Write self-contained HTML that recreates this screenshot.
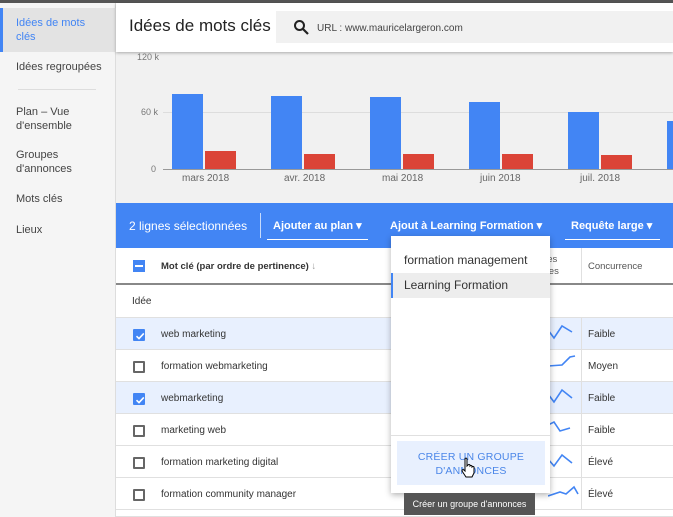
<!DOCTYPE html>
<html style="width:673px;height:517px;overflow:hidden"><head><meta charset="utf-8"><style>
*{margin:0;padding:0;box-sizing:border-box}
body{width:673px;height:517px;overflow:hidden;position:relative;background:#f1f1f1;font-family:"Liberation Sans",Arial,sans-serif;color:#333}
.a{position:absolute}
.side{left:0;top:3px;width:116px;height:514px;background:#f5f5f5;border-right:1px solid #ddd}
.si{position:absolute;left:16px;font-size:11px;color:#444;line-height:14px}
.bb{background:#4285f4}.rb{background:#db4437}
.row{position:absolute;left:116px;width:557px;height:32px;border-bottom:1px solid #e0e0e0;background:#fff;font-size:10px}
.row.sel{background:#e8f0fe}
.cb{position:absolute;left:17px;top:11px;width:12px;height:12px;border:2px solid #666;border-radius:1px;background:#fff}
.cb.on{background:#4285f4;border-color:#4285f4}
.cb.on svg{position:absolute;left:-1px;top:-1px}
.kw{position:absolute;left:45px;top:11px;color:#333}
.cc{position:absolute;left:472px;top:11px;color:#333}
.vd{position:absolute;left:465px;top:0;width:1px;height:32px;background:#e0e0e0}
</style></head><body>
<div class="a" style="left:0;top:0;width:673px;height:3px;background:#555"></div>
<div class="a side"></div>
<div class="a" style="left:0;top:8px;width:116px;height:44px;background:#e3e3e3"></div>
<div class="a" style="left:0;top:8px;width:3px;height:44px;background:#4285f4"></div>
<div class="si" style="top:16px;color:#4285f4">Idées de mots<br>clés</div>
<div class="si" style="top:60px">Idées regroupées</div>
<div class="a" style="left:18px;top:89px;width:78px;height:1px;background:#ddd"></div>
<div class="si" style="top:105px">Plan – Vue<br>d'ensemble</div>
<div class="si" style="top:148px">Groupes<br>d'annonces</div>
<div class="si" style="top:192px">Mots clés</div>
<div class="si" style="top:223px">Lieux</div>
<div class="a" style="left:116px;top:3px;width:557px;height:49px;background:#fff;box-shadow:0 1px 3px rgba(0,0,0,.3)"></div>
<div class="a" style="left:129px;top:16px;font-size:17px;color:#222">Idées de mots clés</div>
<div class="a" style="left:276px;top:11px;width:397px;height:32px;background:#f1f1f1"></div>
<svg class="a" style="left:293px;top:19px" width="16" height="16" viewBox="0 0 16 16"><circle cx="6.5" cy="6.5" r="4.5" fill="none" stroke="#222" stroke-width="2"/><path d="M10 10l5 5" stroke="#222" stroke-width="2.2"/></svg>
<div class="a" style="left:317px;top:23px;font-size:10px;color:#444">URL : www.mauricelargeron.com</div>
<div class="a" style="left:137px;top:52px;font-size:9px;color:#777">120 k</div>
<div class="a" style="left:141px;top:107px;font-size:9px;color:#777">60 k</div>
<div class="a" style="left:151px;top:164px;font-size:9px;color:#777">0</div>
<div class="a" style="left:163px;top:112px;width:510px;height:1px;background:#ddd"></div>
<div class="a" style="left:163px;top:169px;width:510px;height:1px;background:#999"></div>
<div class="a bb" style="left:172px;top:94px;width:31px;height:75px"></div><div class="a rb" style="left:205px;top:151px;width:31px;height:18px"></div>
<div class="a bb" style="left:271px;top:96px;width:31px;height:73px"></div><div class="a rb" style="left:304px;top:154px;width:31px;height:15px"></div>
<div class="a bb" style="left:370px;top:97px;width:31px;height:72px"></div><div class="a rb" style="left:403px;top:154px;width:31px;height:15px"></div>
<div class="a bb" style="left:469px;top:102px;width:31px;height:67px"></div><div class="a rb" style="left:502px;top:154px;width:31px;height:15px"></div>
<div class="a bb" style="left:568px;top:112px;width:31px;height:57px"></div><div class="a rb" style="left:601px;top:155px;width:31px;height:14px"></div>
<div class="a bb" style="left:667px;top:121px;width:31px;height:48px"></div>
<div class="a" style="left:182px;top:173px;font-size:10px;color:#666">mars 2018</div>
<div class="a" style="left:284px;top:173px;font-size:10px;color:#666">avr. 2018</div>
<div class="a" style="left:382px;top:173px;font-size:10px;color:#666">mai 2018</div>
<div class="a" style="left:480px;top:173px;font-size:10px;color:#666">juin 2018</div>
<div class="a" style="left:580px;top:173px;font-size:10px;color:#666">juil. 2018</div>
<div class="a" style="left:116px;top:203px;width:557px;height:45px;background:#4285f4;color:#fff">
<div class="a" style="left:13px;top:16px;font-size:12px">2 lignes sélectionnées</div>
<div class="a" style="left:144px;top:10px;width:1px;height:25px;background:rgba(255,255,255,.7)"></div>
<div class="a" style="left:157px;top:16px;font-size:11px;font-weight:bold">Ajouter au plan ▾</div>
<div class="a" style="left:151px;top:36px;width:101px;height:1px;background:#fff"></div>
<div class="a" style="left:274px;top:16px;font-size:11px;font-weight:bold">Ajout à Learning Formation ▾</div>
<div class="a" style="left:455px;top:16px;font-size:11px;font-weight:bold">Requête large ▾</div>
<div class="a" style="left:449px;top:36px;width:95px;height:1px;background:#fff"></div>
</div>
<div class="a" style="left:116px;top:248px;width:557px;height:37px;background:#fff;border-bottom:2px solid #888">
<div class="a" style="left:17px;top:12px;width:12px;height:12px;background:#4285f4"><div style="position:absolute;left:2px;top:5px;width:8px;height:2px;background:#fff"></div></div>
<div class="a" style="left:45px;top:13px;font-size:9.5px;font-weight:bold;color:#333">Mot clé (par ordre de pertinence) <span style="font-weight:normal;color:#999">↓</span></div>
<div class="a" style="left:418px;top:6px;font-size:9.5px;color:#555;line-height:12px">rches<br>uelles</div>
<div class="a" style="left:465px;top:0;width:1px;height:35px;background:#e0e0e0"></div>
<div class="a" style="left:472px;top:13px;font-size:9.5px;color:#555">Concurrence</div>
</div>
<div class="row" style="top:285px;height:33px;background:#fff"><div class="kw" style="left:16px;top:11px">Idée</div></div>
<div class="row sel" style="top:318px"><div class="cb on"><svg width="12" height="12" viewBox="0 0 12 12"><path d="M2.5 6.2 L5 8.6 L9.8 3.4" fill="none" stroke="#fff" stroke-width="1.6"/></svg></div><div class="kw">web marketing</div><div class="vd"></div><div class="cc">Faible</div></div>
<div class="row" style="top:350px"><div class="cb"></div><div class="kw">formation webmarketing</div><div class="vd"></div><div class="cc">Moyen</div></div>
<div class="row sel" style="top:382px"><div class="cb on"><svg width="12" height="12" viewBox="0 0 12 12"><path d="M2.5 6.2 L5 8.6 L9.8 3.4" fill="none" stroke="#fff" stroke-width="1.6"/></svg></div><div class="kw">webmarketing</div><div class="vd"></div><div class="cc">Faible</div></div>
<div class="row" style="top:414px"><div class="cb"></div><div class="kw">marketing web</div><div class="vd"></div><div class="cc">Faible</div></div>
<div class="row" style="top:446px"><div class="cb"></div><div class="kw">formation marketing digital</div><div class="vd"></div><div class="cc">Élevé</div></div>
<div class="row" style="top:478px"><div class="cb"></div><div class="kw">formation community manager</div><div class="vd"></div><div class="cc">Élevé</div></div>
<div class="row" style="top:510px;height:7px"></div>
<svg class="a" style="left:548px;top:318px" width="34" height="199" viewBox="0 0 34 199" fill="none" stroke="#4285f4" stroke-width="1.6">
<path d="M0 12 L6 20 L14 8 L24 14"/><path d="M0 48 L14 47 L22 39 L27 38"/><path d="M0 76 L6 84 L14 72 L24 80"/><path d="M0 107 L6 104 L12 113 L22 110"/><path d="M0 141 L6 148 L14 137 L24 145"/><path d="M0 178 L12 174 L18 176 L26 169 L30 176"/>
</svg>
<div class="a" style="left:391px;top:236px;width:159px;height:257px;background:#fff;box-shadow:0 2px 6px rgba(0,0,0,.3)">
<div class="a" style="left:13px;top:17px;font-size:12px;color:#333">formation management</div>
<div class="a" style="left:0;top:37px;width:159px;height:25px;background:#ededed;border-left:2px solid #4285f4"></div>
<div class="a" style="left:13px;top:42px;font-size:12px;color:#333">Learning Formation</div>
<div class="a" style="left:0;top:199px;width:159px;height:1px;background:#e0e0e0"></div>
<div class="a" style="left:6px;top:205px;width:148px;height:44px;background:#e8f0fe;color:#4a86e8;font-size:10.5px;text-align:center;line-height:14px;padding-top:9px;letter-spacing:.2px">CRÉER UN GROUPE<br>D'ANNONCES</div>
</div>
<svg class="a" style="left:461px;top:457px" width="16" height="22" viewBox="0 0 16 22"><path d="M4 2 Q5 0 6 2 L6 9 L7 8 Q8 7 9 8 L9 9 Q10 8 11 9 L11 10 Q12 9 13 10 L13 16 L11 20 L5 20 L1 14 Q1 12 3 13 L4 14 Z" fill="#fff" stroke="#000" stroke-width="1"/></svg>
<div class="a" style="left:404px;top:493px;width:131px;height:22px;background:#555;color:#fff;font-size:9px;line-height:22px;text-align:center">Créer un groupe d'annonces</div>
</body></html>
